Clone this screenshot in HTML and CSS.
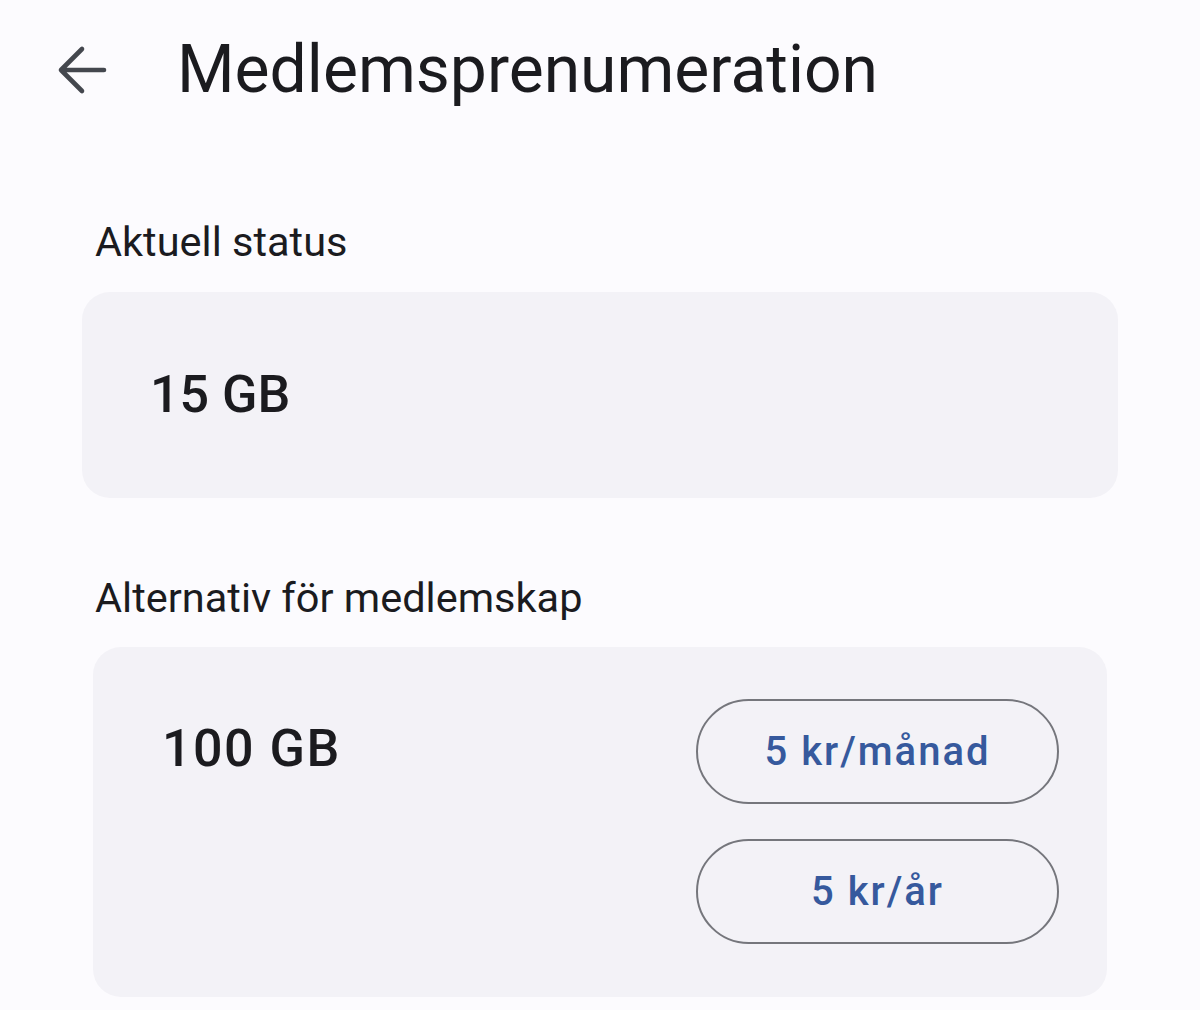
FILE: index.html
```html
<!DOCTYPE html>
<html lang="sv">
<head>
<meta charset="utf-8">
<title>Medlemsprenumeration</title>
<link rel="stylesheet" href="styles.css">
</head>
<body>
<header class="topbar">
  <button class="back" aria-label="Tillbaka">
    <svg viewBox="0 0 52 52" width="52" height="52"><path d="M48 26H5M26 5L5 26l21 21" fill="none" stroke="#44474e" stroke-width="4.6" stroke-linecap="round" stroke-linejoin="round"/></svg>
  </button>
  <h1 class="title">Medlemsprenumeration</h1>
</header>
<main>
  <h2 class="label first">Aktuell status</h2>
  <section class="card status">
    <div class="size">15 GB</div>
  </section>
  <h2 class="label second">Alternativ för medlemskap</h2>
  <section class="card plans">
    <div class="size">100 GB</div>
    <div class="btns">
      <button class="price">5 kr/månad</button>
      <button class="price">5 kr/år</button>
    </div>
  </section>
</main>
</body>
</html>
```
FILE: styles.css
```css
html, body {
  margin: 0;
  padding: 0;
  background: #fcfbfe;
  font-family: Roboto, "Open Sans", sans-serif;
  color: #1b1b1f;
}
.topbar {
  display: flex;
  align-items: center;
  padding: 30px 0 0 0;
  height: 80px;
}
.back {
  border: 0;
  background: none;
  padding: 0;
  margin-left: 56px;
  width: 52px;
  height: 52px;
  display: flex;
  align-items: center;
  justify-content: center;
}
.title {
  margin: 0 0 0 69px;
  font-size: 66px;
  line-height: 80px;
  font-weight: 400;
}
.label {
  margin: 0 0 0 95px;
  font-size: 41.5px;
  line-height: 48px;
  font-weight: 400;
}
.label.first { margin-top: 108px; }
.label.second { margin-top: 76px; }
.card {
  background: #f3f2f7;
  border-radius: 28px;
}
.status {
  margin: 26px 82px 0 82px;
  padding: 72px 68px;
}
.size {
  font-size: 52px;
  line-height: 62px;
  font-weight: 500;
}
.plans {
  margin: 25px 93px 0 93px;
  padding: 52px 48px 53px 69px;
  display: flex;
  justify-content: space-between;
  align-items: flex-start;
}
.plans .size {
  margin-top: 19px;
  letter-spacing: 1.5px;
}
.btns {
  display: flex;
  flex-direction: column;
  gap: 35px;
}
.price {
  width: 363px;
  height: 105px;
  border: 2px solid #75767c;
  border-radius: 53px;
  background: transparent;
  font-family: inherit;
  font-size: 40px;
  font-weight: 500;
  color: #36599d;
  letter-spacing: 2px;
}
```
